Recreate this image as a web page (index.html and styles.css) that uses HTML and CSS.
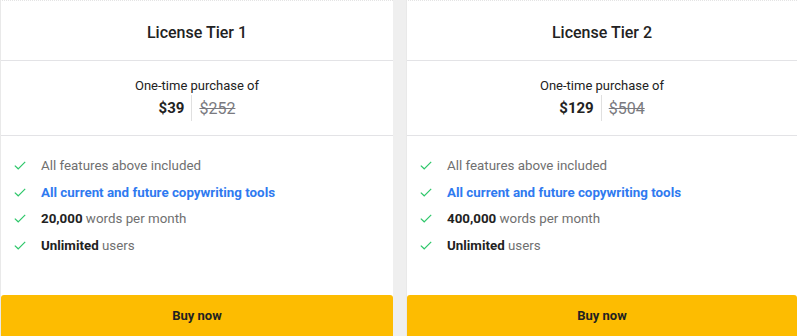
FILE: index.html
```html
<!DOCTYPE html>
<html lang="en">
<head>
<meta charset="utf-8">
<title>License Tiers</title>
<link rel="stylesheet" href="styles.css">
</head>
<body>
<div class="tiers">
  <div class="card card-first">
    <div class="card-head">License Tier 1</div>
    <div class="card-price">
      <div class="price-label">One-time purchase of</div>
      <div class="price-row">
        <span class="price-now">$39</span>
        <span class="price-sep"></span>
        <span class="price-old">$252</span>
      </div>
    </div>
    <ul class="features">
      <li><svg class="check" viewBox="0 0 12 9"><path d="M0.8 4.6 L4.2 7.8 L11.2 0.8"/></svg><span>All features above included</span></li>
      <li><svg class="check" viewBox="0 0 12 9"><path d="M0.8 4.6 L4.2 7.8 L11.2 0.8"/></svg><span class="hl">All current and future copywriting tools</span></li>
      <li><svg class="check" viewBox="0 0 12 9"><path d="M0.8 4.6 L4.2 7.8 L11.2 0.8"/></svg><span><b>20,000</b> words per month</span></li>
      <li><svg class="check" viewBox="0 0 12 9"><path d="M0.8 4.6 L4.2 7.8 L11.2 0.8"/></svg><span><b>Unlimited</b> users</span></li>
    </ul>
    <button class="buy">Buy now</button>
  </div>
  <div class="card">
    <div class="card-head">License Tier 2</div>
    <div class="card-price">
      <div class="price-label">One-time purchase of</div>
      <div class="price-row">
        <span class="price-now">$129</span>
        <span class="price-sep"></span>
        <span class="price-old">$504</span>
      </div>
    </div>
    <ul class="features">
      <li><svg class="check" viewBox="0 0 12 9"><path d="M0.8 4.6 L4.2 7.8 L11.2 0.8"/></svg><span>All features above included</span></li>
      <li><svg class="check" viewBox="0 0 12 9"><path d="M0.8 4.6 L4.2 7.8 L11.2 0.8"/></svg><span class="hl">All current and future copywriting tools</span></li>
      <li><svg class="check" viewBox="0 0 12 9"><path d="M0.8 4.6 L4.2 7.8 L11.2 0.8"/></svg><span><b>400,000</b> words per month</span></li>
      <li><svg class="check" viewBox="0 0 12 9"><path d="M0.8 4.6 L4.2 7.8 L11.2 0.8"/></svg><span><b>Unlimited</b> users</span></li>
    </ul>
    <button class="buy">Buy now</button>
  </div>
</div>
</body>
</html>
```
FILE: styles.css
```css
html, body {
  margin: 0;
  padding: 0;
  background: #efefef;
  overflow: hidden;
}
body {
  font-family: Roboto, "Liberation Sans", sans-serif;
  color: #222;
}
.tiers {
  display: flex;
  gap: 13px;
  width: 797px;
}
.card {
  flex: 1;
  height: 343px;
  background: #fff;
  border-left: 1px solid #e9e9e9;
  border-top: 1px dotted #e4e4e4;
  display: flex;
  flex-direction: column;
  box-sizing: border-box;
}
.card-first {
  flex: 0 0 393px;
}
.card-head {
  height: 60px;
  display: flex;
  align-items: center;
  justify-content: center;
  font-size: 16px;
  font-weight: 500;
  color: #222;
  border-bottom: 1px solid #e3e3e6;
  padding-top: 3px;
  box-sizing: border-box;
}
.card-price {
  display: flex;
  flex-direction: column;
  align-items: center;
  padding: 16px 0 14px;
  border-bottom: 1px solid #e3e3e6;
}
.price-label {
  font-size: 13px;
  line-height: 18px;
  color: #222;
}
.price-row {
  display: flex;
  align-items: center;
  height: 26px;
  gap: 7px;
}
.price-now {
  font-size: 15px;
  font-weight: 700;
  color: #222;
}
.price-sep {
  width: 1px;
  height: 26px;
  background: #e0e0e0;
}
.price-old {
  font-size: 16px;
  color: #7a7a80;
  text-decoration: line-through;
}
.features {
  list-style: none;
  margin: 0;
  padding: 16px 19px 0 13px;
  flex: 1;
}
.features li {
  display: flex;
  align-items: center;
  height: 26.7px;
  font-size: 13.35px;
  color: #707070;
}
.features b {
  font-weight: 700;
  color: #222;
}
.hl {
  color: #2f7af0;
  font-weight: 700;
}
.check {
  width: 12px;
  height: 9px;
  margin-right: 15px;
  flex: none;
}
.check path {
  fill: none;
  stroke: #2ec76a;
  stroke-width: 1.2;
}
.buy {
  height: 48px;
  border: none;
  border-radius: 3px;
  background: #fdbc01;
  font-family: Roboto, "Liberation Sans", sans-serif;
  font-size: 13px;
  font-weight: 700;
  color: #222;
  padding: 0 0 7px;
  cursor: pointer;
}
```
